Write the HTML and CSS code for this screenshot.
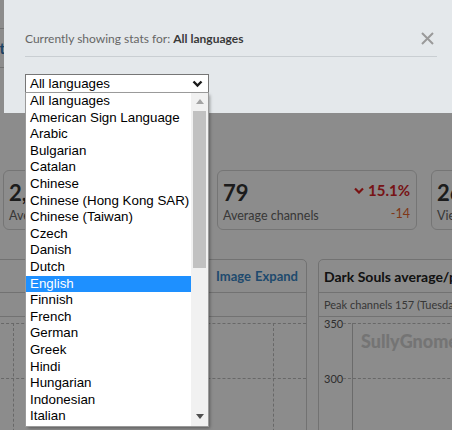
FILE: index.html
```html
<!DOCTYPE html>
<html lang="en">
<head>
  <meta charset="UTF-8" />
  <meta name="viewport" content="width=device-width, initial-scale=1.0"/>
  <title>Dark Souls - Stream stats</title>
  <link rel="stylesheet" href="styles.css">
</head>
<body>

  <div class="page">
    <div class="topnav"><span class="tab">Chart</span></div>

    <div class="stats">
      <div class="stat">
        <div>
          <div class="stat-value">2,418</div>
          <div class="stat-label">Average viewers</div>
        </div>
      </div>
      <div class="stat">
        <div>
          <div class="stat-value">79</div>
          <div class="stat-label">Average channels</div>
        </div>
        <div class="stat-change">
          <div class="change-pct">
            <svg width="10" height="7" viewBox="0 0 10 7"><path d="M1 1.5 L5 5.5 L9 1.5" fill="none" stroke="#d22" stroke-width="2.2"/></svg>
            15.1%
          </div>
          <div class="change-abs">-14</div>
        </div>
      </div>
      <div class="stat">
        <div>
          <div class="stat-value">26</div>
          <div class="stat-label">Viewers per channel</div>
        </div>
      </div>
    </div>

    <div class="panels">
      <div class="panel panel-left">
        <div class="panel-head panel-head-links">
          <a href="#">Image</a> <a href="#">Expand</a>
        </div>
        <div class="panel-sub"></div>
        <div class="chart">
          <div class="grid-h" style="top: 6px"></div>
          <div class="grid-h" style="top: 61px"></div>
          <div class="grid-v" style="left: 22px"></div>
          <div class="grid-v" style="left: 282px"></div>
        </div>
      </div>
      <div class="panel panel-right">
        <div class="panel-head">Dark Souls average/peak viewers</div>
        <div class="panel-sub">Peak channels 157 (Tuesday 14th)</div>
        <div class="chart">
          <span class="axis-label" style="top: 0px">350</span>
          <span class="axis-label" style="top: 55px">300</span>
          <div class="grid-h grid-r" style="top: 6px"></div>
          <div class="grid-h grid-r" style="top: 61px"></div>
          <div class="axis-y"></div>
          <div class="watermark">SullyGnome</div>
        </div>
      </div>
    </div>

    <div class="overlay"></div>

    <div class="modal">
      <div class="modal-head">
        <div class="modal-title">Currently showing stats for: <b>All languages</b></div>
        <svg class="close" width="13" height="13" viewBox="0 0 13 13">
          <path d="M1 1 L12 12 M12 1 L1 12" stroke="#9a9a9a" stroke-width="2"/>
        </svg>
      </div>

      <div class="picker">
        <div class="picker-box">
          <span>All languages</span>
          <svg width="11" height="8" viewBox="0 0 11 8"><path d="M1.5 1.5 L5.5 5.5 L9.5 1.5" fill="none" stroke="#1a1a1a" stroke-width="2.4"/></svg>
        </div>
        <div class="picker-list">
          <div class="options">
            <div class="option">All languages</div>
            <div class="option">American Sign Language</div>
            <div class="option">Arabic</div>
            <div class="option">Bulgarian</div>
            <div class="option">Catalan</div>
            <div class="option">Chinese</div>
            <div class="option">Chinese (Hong Kong SAR)</div>
            <div class="option">Chinese (Taiwan)</div>
            <div class="option">Czech</div>
            <div class="option">Danish</div>
            <div class="option">Dutch</div>
            <div class="option active">English</div>
            <div class="option">Finnish</div>
            <div class="option">French</div>
            <div class="option">German</div>
            <div class="option">Greek</div>
            <div class="option">Hindi</div>
            <div class="option">Hungarian</div>
            <div class="option">Indonesian</div>
            <div class="option">Italian</div>
          </div>
          <div class="scrollbar">
            <svg class="arrow-up" width="8" height="5" viewBox="0 0 8 5"><path d="M0 5 L4 0 L8 5 Z" fill="#a3a3a3"/></svg>
            <div class="thumb"></div>
            <svg class="arrow-down" width="8" height="5" viewBox="0 0 8 5"><path d="M0 0 L4 5 L8 0 Z" fill="#505050"/></svg>
          </div>
        </div>
      </div>
    </div>
  </div>

</body>
</html>
```

FILE: styles.css
```css
:root {
  --line: #cfcfcf;
  --modal-bg: #e4e8eb;
  --select-blue: #1e90ff;
}

body {
  margin: 0;
  font-family: Lato, 'Open Sans', sans-serif;
  color: #333;
}

.page {
  position: relative;
  width: 452px;
  height: 430px;
  overflow: hidden;
  background: #fff;
}

/* page behind the modal */
.topnav {
  margin-top: 28px;
  height: 38px;
  border-top: 1px solid var(--line);
  border-bottom: 1px solid var(--line);
  display: flex;
  align-items: center;
}

.tab {
  margin-left: -32px;
  font-weight: bold;
  font-size: 15px;
  color: #337ab7;
}

.stats {
  display: flex;
  gap: 14px;
  margin-top: 102px;
  padding-left: 3px;
}

.stat {
  flex: 0 0 200px;
  height: 60px;
  box-sizing: border-box;
  border: 1px solid #d6d6d6;
  border-radius: 6px;
  padding: 8px 6px 0 5px;
  display: flex;
  justify-content: space-between;
}

.stat-value {
  font-size: 22px;
  font-weight: bold;
  line-height: 28px;
  color: #333;
}

.stat-label {
  font-size: 12.5px;
  color: #666;
  line-height: 18px;
}

.stat-change {
  text-align: right;
}

.change-pct {
  font-size: 15px;
  font-weight: bold;
  color: #d9262a;
  line-height: 22px;
  margin-bottom: 4px;
}

.change-pct svg {
  vertical-align: 2px;
}

.change-abs {
  font-size: 12.5px;
  color: #e8652d;
  line-height: 18px;
}

.panels {
  display: flex;
  gap: 11px;
  margin-top: 29px;
  margin-left: -10px;
}

.panel {
  border: 1px solid var(--line);
  border-radius: 5px;
  height: 200px;
  flex-shrink: 0;
}

.panel-left {
  width: 315px;
}

.panel-right {
  width: 300px;
}

.panel-head {
  height: 32px;
  border-bottom: 1px solid var(--line);
  padding: 0 5px;
  display: flex;
  align-items: center;
  font-size: 14px;
  font-weight: bold;
  color: #222;
}

.panel-head-links {
  justify-content: flex-end;
  gap: 4px;
  padding-right: 8px;
  font-size: 13px;
}

.panel-head-links a {
  color: #3a88c8;
  text-decoration: none;
}

.panel-sub {
  height: 23px;
  border-bottom: 1px solid var(--line);
  padding: 0 5px;
  font-size: 11px;
  line-height: 23px;
  color: #666;
}

.chart {
  position: relative;
  height: 140px;
}

.grid-h {
  position: absolute;
  left: 0;
  right: 0;
  border-top: 1px dashed #bdbdbd;
}

.grid-r {
  left: 24px;
}

.grid-v {
  position: absolute;
  top: 6px;
  bottom: 0;
  border-left: 1px dashed #bdbdbd;
}

.axis-y {
  position: absolute;
  left: 33px;
  top: 6px;
  bottom: 0;
  border-left: 1px solid #c4c4c4;
}

.axis-label {
  position: absolute;
  left: 5px;
  font-size: 11px;
  line-height: 13px;
  color: #555;
}

.watermark {
  position: absolute;
  left: 42px;
  top: 13px;
  font-size: 18px;
  font-weight: 900;
  color: #d4d4d4;
}

.overlay {
  position: absolute;
  inset: 0;
  background: rgba(0, 0, 0, 0.45);
}

/* modal */
.modal {
  position: absolute;
  left: 4px;
  top: 0;
  width: 470px;
  height: 113px;
  box-sizing: border-box;
  background: var(--modal-bg);
  padding: 26px 37px 0 21px;
}

.modal-head {
  display: flex;
  justify-content: space-between;
  align-items: center;
  height: 24px;
  padding-bottom: 6px;
  border-bottom: 1px solid #c9ced2;
}

.modal-title {
  font-size: 12px;
  color: #666;
}

.modal-title b {
  color: #3a3a3a;
}

.close {
  margin-right: 3px;
}

.picker {
  position: relative;
  margin-top: 17px;
  width: 184px;
  font-family: 'Liberation Sans', Arial, sans-serif;
  font-size: 13.33px;
  color: #000;
}

.picker-box {
  height: 19px;
  box-sizing: border-box;
  border: 1px solid #767676;
  background: #fff;
  padding: 0 5px 0 4px;
  display: flex;
  align-items: center;
  justify-content: space-between;
}

.picker-list {
  position: absolute;
  top: 19px;
  left: 1px;
  width: 182px;
  height: 333px;
  background: #fff;
  display: flex;
  box-shadow: 0 0 0 1px #9a9a9a, 2px 2px 3px rgba(0, 0, 0, 0.35);
}

.options {
  flex: 1;
}

.option {
  height: 16.6px;
  line-height: 16.6px;
  padding-left: 4px;
  white-space: nowrap;
}

.option.active {
  background: var(--select-blue);
  color: #fff;
}

.scrollbar {
  width: 17px;
  background: #f1f1f1;
  display: flex;
  flex-direction: column;
  align-items: center;
}

.arrow-up {
  margin-top: 6px;
}

.thumb {
  width: 13px;
  height: 157px;
  margin-top: 7px;
  background: #c1c1c1;
}

.arrow-down {
  margin-top: auto;
  margin-bottom: 7px;
}
```
